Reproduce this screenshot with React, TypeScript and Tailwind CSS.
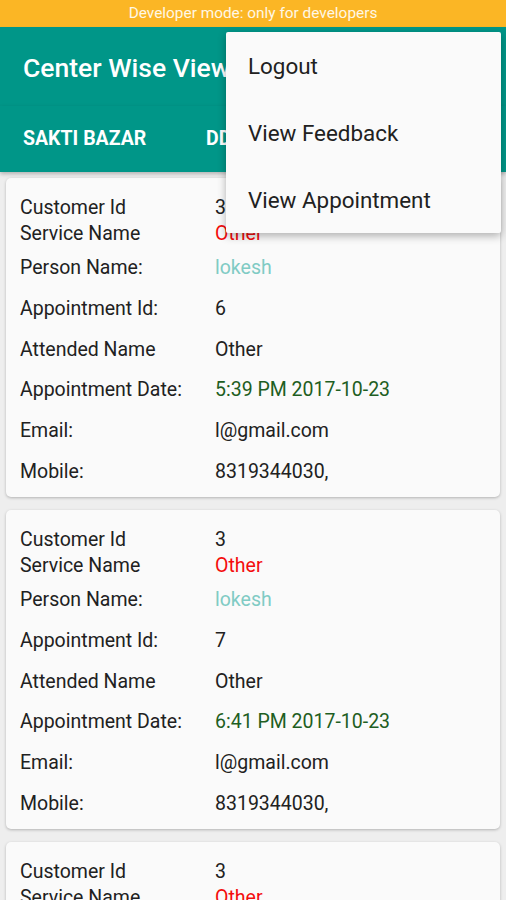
import React from 'react';

type Appointment = {
  customerId: string;
  serviceName: string;
  personName: string;
  appointmentId: string;
  attendedName: string;
  date: string;
  email: string;
  mobile: string;
};

const appointments: Appointment[] = [
  { customerId: '3', serviceName: 'Other', personName: 'lokesh', appointmentId: '6', attendedName: 'Other', date: '5:39 PM 2017-10-23', email: 'l@gmail.com', mobile: '8319344030,' },
  { customerId: '3', serviceName: 'Other', personName: 'lokesh', appointmentId: '7', attendedName: 'Other', date: '6:41 PM 2017-10-23', email: 'l@gmail.com', mobile: '8319344030,' },
  { customerId: '3', serviceName: 'Other', personName: 'lokesh', appointmentId: '8', attendedName: 'Other', date: '6:45 PM 2017-10-23', email: 'l@gmail.com', mobile: '8319344030,' },
];

const Row: React.FC<{ label: string; value: string; tall?: boolean; valueClass?: string }> = ({ label, value, tall, valueClass }) => (
  <div className={`flex items-center ${tall ? 'h-[40.7px]' : 'h-[26px]'}`}>
    <div className="w-[195px] shrink-0 text-[#212121]">{label}</div>
    <div className={valueClass ?? 'text-[#212121]'}>{value}</div>
  </div>
);

const AppointmentCard: React.FC<{ a: Appointment }> = ({ a }) => (
  <div className="h-[319px] shrink-0 rounded-[5px] bg-[#fafafa] pl-[14px] pt-[17px] shadow-[0_1px_3px_rgba(0,0,0,0.25)]">
    <Row label="Customer Id" value={a.customerId} />
    <Row label="Service Name" value={a.serviceName} valueClass="text-[#f40d0d]" />
    <div className="mt-[0.5px]">
      <Row tall label="Person Name:" value={a.personName} valueClass="text-[#80cbc4]" />
      <Row tall label="Appointment Id:" value={a.appointmentId} />
      <Row tall label="Attended Name" value={a.attendedName} />
      <Row tall label="Appointment Date:" value={a.date} valueClass="text-[#1e5e22]" />
      <Row tall label="Email:" value={a.email} />
      <Row tall label="Mobile:" value={a.mobile} />
    </div>
  </div>
);

export default function App() {
  return (
    <div className="relative h-[900px] w-[506px] overflow-hidden bg-[#eeeeee] font-['Roboto',sans-serif] text-[19.5px]">
      <div className="flex h-[27px] items-center justify-center bg-[#fbb625] text-[15.4px] text-[#fff8e6]">
        Developer mode: only for developers
      </div>
      <div className="flex h-[79px] items-center bg-[#009688] pl-[23px] pt-[2px] text-[26.5px] font-medium text-white shadow-[0_1px_2px_rgba(0,0,0,0.2)]">
        Center Wise View
      </div>
      <div className="relative z-10 flex h-[66px] items-center bg-[#009688] text-[19.5px] font-bold text-white shadow-[0_2px_4px_rgba(0,0,0,0.25)]">
        <div className="w-[206px] pl-[23px]">SAKTI BAZAR</div>
        <div>DDU NAGAR</div>
      </div>
      <div className="flex flex-col gap-[13px] px-[6px] pt-[6px]">
        {appointments.map((a, i) => (
          <AppointmentCard key={i} a={a} />
        ))}
      </div>

      <div className="absolute left-[226px] top-[32px] z-20 w-[275px] rounded-[2px] bg-[#fafafa] shadow-[0_3px_8px_rgba(0,0,0,0.3)]">
        {['Logout', 'View Feedback', 'View Appointment'].map((item) => (
          <div key={item} className="flex h-[67px] items-center pl-[22px] pt-[2px] text-[22.4px] text-[#212121]">
            {item}
          </div>
        ))}
      </div>
    </div>
  );
}
